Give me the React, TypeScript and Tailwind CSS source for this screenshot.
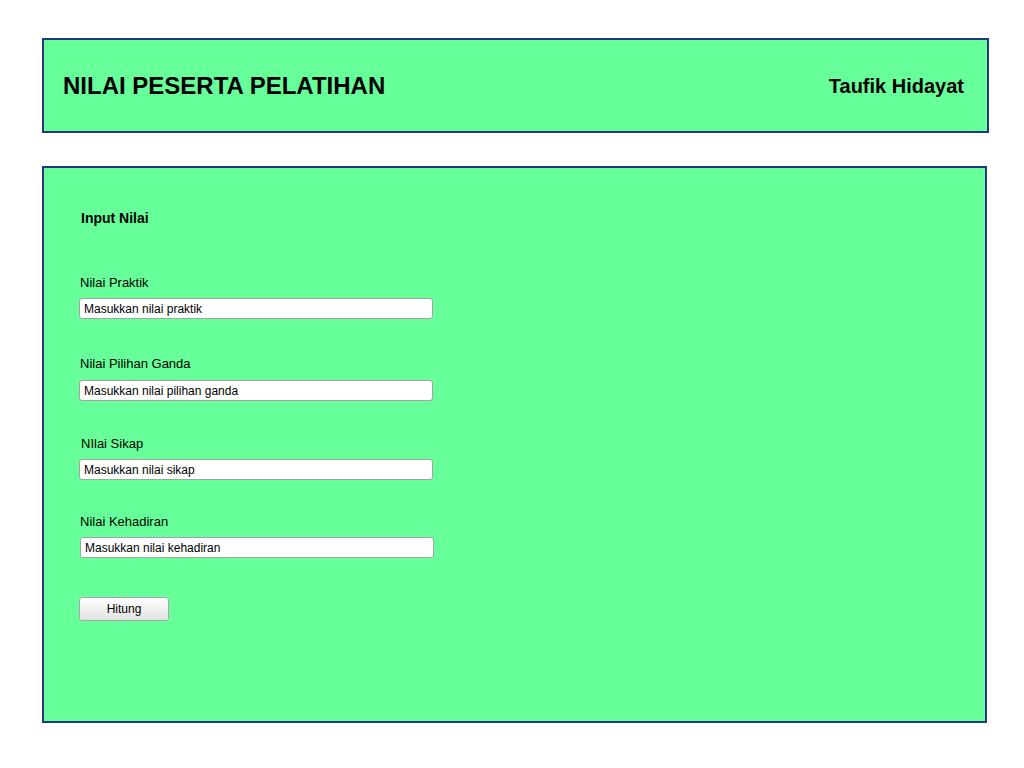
const fields = [
  { label: "Nilai Praktik", value: "Masukkan nilai praktik", gap: "mt-[49px]", labelX: "ml-px", inputGap: "mt-[8px]", inputX: "" },
  { label: "Nilai Pilihan Ganda", value: "Masukkan nilai pilihan ganda", gap: "mt-[37px]", labelX: "ml-px", inputGap: "mt-[9px]", inputX: "" },
  { label: "NIlai Sikap", value: "Masukkan nilai sikap", gap: "mt-[35px]", labelX: "ml-[2px]", inputGap: "mt-[8px]", inputX: "" },
  { label: "Nilai Kehadiran", value: "Masukkan nilai kehadiran", gap: "mt-[34px]", labelX: "ml-px", inputGap: "mt-[8px]", inputX: "ml-px" },
];

export default function App() {
  return (
    <div className="min-h-[768px] w-full bg-white font-['Liberation_Sans',Arial,sans-serif] text-black pt-[38px] pl-[42px]">
      {/* Header */}
      <div className="w-[947px] h-[95px] border-2 border-[#22397f] bg-[#66ff99] flex items-center justify-between pl-[19px] pr-[23px]">
        <h1 className="text-[24px] font-bold leading-none">NILAI PESERTA PELATIHAN</h1>
        <span className="text-[20px] font-bold leading-none">Taufik Hidayat</span>
      </div>

      {/* Form panel */}
      <div className="mt-[33px] w-[945px] h-[557px] border-2 border-[#22397f] bg-[#66ff99] pt-[42px] pl-[35px]">
        <h2 className="text-[14px] font-bold leading-[16px] ml-[2px]">Input Nilai</h2>

        {fields.map((f) => (
          <div key={f.label} className={f.gap}>
            <label className={`block text-[13px] leading-[15px] ${f.labelX}`}>{f.label}</label>
            <input
              readOnly
              value={f.value}
              className={`${f.inputGap} ${f.inputX} block w-[354px] h-[21px] bg-white border border-[#a3a3a3] rounded-[3px] px-[4px] text-[12px] text-black outline-none font-['Liberation_Sans',Arial,sans-serif]`}
            />
          </div>
        ))}

        <button className="mt-[39px] w-[90px] h-[24px] rounded-[3px] border border-[#a9a9a9] bg-gradient-to-b from-white to-[#e2e2e2] text-[12px] text-black">
          Hitung
        </button>
      </div>
    </div>
  );
}
